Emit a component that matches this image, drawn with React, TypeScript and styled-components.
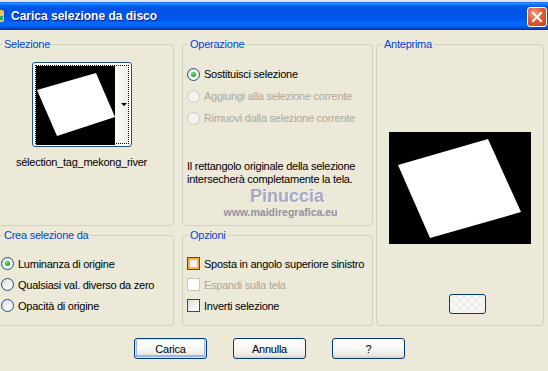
import React from "react";
import styled, { createGlobalStyle } from "styled-components";

const GlobalStyle = createGlobalStyle`
  html, body {
    margin: 0;
    padding: 0;
    background: #ece9d8;
    overflow: hidden;
  }
  body {
    font-family: "Liberation Sans", Arial, sans-serif;
    font-size: 11px;
    letter-spacing: -0.25px;
    color: #000;
  }
`;

const Window = styled.div`
  width: 548px;
  height: 371px;
  display: flex;
  flex-direction: column;
  background: #ece9d8;
  overflow: hidden;
`;

const TopEdge = styled.div`
  height: 2px;
  background: #dfe3ea;
`;

const TitleBar = styled.div`
  height: 28px;
  display: flex;
  align-items: flex-start;
  background: linear-gradient(
    180deg,
    #0058ee 0%,
    #3593ff 4%,
    #127dff 8%,
    #0262ee 14%,
    #0057e5 20%,
    #0054e3 24%,
    #0055eb 56%,
    #005bf5 66%,
    #026afe 76%,
    #0062ef 86%,
    #0052d6 92%,
    #0040ab 96%,
    #003092 100%
  );
`;

const AppIcon = styled.svg`
  width: 16px;
  height: 16px;
  margin: 6px 5px 0 -10px;
  flex: none;
`;

const Title = styled.div`
  color: #fff;
  font-family: "Liberation Sans", Arial, sans-serif;
  font-weight: bold;
  font-size: 12px;
  letter-spacing: 0;
  line-height: 28px;
  text-shadow: 1px 1px 0 #0a1883;
`;

const CloseButton = styled.div`
  margin: 5px 1px 0 auto;
  width: 18px;
  height: 18px;
  border: 1px solid #fff;
  border-radius: 3px;
  background: radial-gradient(circle at 35% 30%, #f0a080 0%, #e35c36 45%, #c2401a 100%);
  display: flex;
  align-items: center;
  justify-content: center;
`;

const Layout = styled.div`
  margin: 8px 0 0 -4px;
  display: grid;
  grid-template-columns: 178px 8px 191px 3px 168px;
  grid-template-rows: 188px 97px;
  row-gap: 3px;
  grid-template-areas:
    "sel . op . prev"
    "crea . opt . prev";
`;

const GroupBox = styled.fieldset<{ $area: string }>`
  grid-area: ${(p) => p.$area};
  margin: 0;
  padding: 0 5px;
  min-width: 0;
  border: 1px solid #d0d0bf;
  border-radius: 4px;
  box-sizing: border-box;
  display: flex;
  flex-direction: column;
`;

const Legend = styled.legend`
  padding: 0 2px;
  color: #0046d5;
  line-height: 12px;
  font-size: 11px;
`;

const SelContent = styled.div`
  display: flex;
  flex-direction: column;
  align-items: center;
  padding-right: 7px;
`;

const ThumbBox = styled.div`
  margin-top: 12px;
  width: 100px;
  height: 85px;
  box-sizing: border-box;
  border: 1px solid #1c5180;
  border-radius: 3px;
  padding: 2px;
  background: #fff;
`;

const FocusRect = styled.div`
  height: 100%;
  box-sizing: border-box;
  border: 1px dotted #000;
  display: flex;
`;

const ThumbScroll = styled.div`
  flex: 1;
  background: linear-gradient(90deg, #fdfdfb, #eeede5);
  display: flex;
  align-items: center;
  justify-content: flex-end;
  padding-right: 1px;
`;

const DownArrow = styled.div`
  width: 0;
  height: 0;
  border-left: 3px solid transparent;
  border-right: 3px solid transparent;
  border-top: 3px solid #000;
`;

const FileName = styled.div`
  margin-top: 9px;
  line-height: 13px;
  white-space: nowrap;
`;

const Options = styled.div<{ $top: number; $row: number }>`
  margin-top: ${(p) => p.$top}px;
  display: flex;
  flex-direction: column;
  & > * {
    height: ${(p) => p.$row}px;
  }
`;

const OptionRow = styled.div<{ $disabled?: boolean }>`
  display: flex;
  align-items: center;
  gap: 4px;
  margin-left: -1px;
  white-space: nowrap;
  color: ${(p) => (p.$disabled ? "#aca899" : "#000")};
`;

const RadioMark = styled.span<{ $disabled?: boolean }>`
  width: 13px;
  height: 13px;
  box-sizing: border-box;
  border-radius: 50%;
  border: 1px solid ${(p) => (p.$disabled ? "#cac8bb" : "#1c5180")};
  background: ${(p) =>
    p.$disabled ? "#f4f3ee" : "linear-gradient(135deg, #dcdcd7 0%, #fdfdfc 80%)"};
  display: flex;
  align-items: center;
  justify-content: center;
  flex: none;
`;

const RadioDot = styled.span`
  width: 5px;
  height: 5px;
  border-radius: 50%;
  background: radial-gradient(circle at 40% 35%, #6ee66a 0%, #21a121 70%, #177a17 100%);
`;

const CheckMark = styled.span<{ $disabled?: boolean; $hot?: boolean }>`
  width: 13px;
  height: 13px;
  box-sizing: border-box;
  border: 1px solid ${(p) => (p.$disabled ? "#cac8bb" : "#1c5180")};
  background: ${(p) =>
    p.$disabled ? "#fff" : "linear-gradient(135deg, #dcdcd7 0%, #fdfdfc 80%)"};
  box-shadow: ${(p) => (p.$hot ? "inset 0 0 0 2px #f8b636" : "none")};
  flex: none;
`;

const Description = styled.div`
  margin-top: 31px;
  margin-left: -1px;
  line-height: 13px;
`;

const Watermark = styled.div`
  display: flex;
  flex-direction: column;
  align-items: center;
  letter-spacing: 0;
`;

const WatermarkName = styled.div`
  margin-left: 19px;
  font-family: "Liberation Sans", Arial, sans-serif;
  font-weight: bold;
  font-size: 18px;
  line-height: 20px;
  color: #a8a8c0;
  text-shadow: 1px 1px 0 #f6f6fa;
`;

const WatermarkUrl = styled.div`
  margin-left: 6px;
  font-family: "Liberation Sans", Arial, sans-serif;
  font-weight: bold;
  font-size: 10.5px;
  line-height: 12px;
  color: #92929f;
`;

const PreviewContent = styled.div`
  display: flex;
  flex-direction: column;
  align-items: center;
`;

const PreviewImage = styled.svg`
  margin-top: 82px;
  display: block;
`;

const PreviewButton = styled.div`
  margin: 50px 0 0 67px;
  align-self: flex-start;
  width: 37px;
  height: 20px;
  box-sizing: border-box;
  border: 1px solid #003c74;
  border-radius: 3px;
  background-color: #f8f8f6;
  background-image: linear-gradient(45deg, #eeeeeb 25%, transparent 25%, transparent 75%, #eeeeeb 75%),
    linear-gradient(45deg, #eeeeeb 25%, transparent 25%, transparent 75%, #eeeeeb 75%);
  background-size: 8px 8px;
  background-position: 0 0, 4px 4px;
`;

const ButtonRow = styled.div`
  margin-top: 12px;
  padding-right: 9px;
  display: flex;
  justify-content: center;
  gap: 26px;
`;

const DialogButton = styled.button<{ $default?: boolean }>`
  width: 73px;
  height: 21px;
  padding: 0;
  border: 1px solid #003c74;
  border-radius: 3px;
  font-family: "Liberation Sans", Arial, sans-serif;
  font-size: 11px;
  letter-spacing: -0.25px;
  color: #000;
  background: linear-gradient(180deg, #ffffff 0%, #f6f6f3 55%, #e9e8e1 85%, #d6d0c5 100%);
  box-shadow: ${(p) =>
    p.$default ? "inset 0 0 0 1px #cee7ff, inset 0 -1px 0 2px #98b8f5" : "none"};
`;

function Radio({ label, checked, disabled }: { label: string; checked?: boolean; disabled?: boolean }) {
  return (
    <OptionRow $disabled={disabled}>
      <RadioMark $disabled={disabled}>{checked && <RadioDot />}</RadioMark>
      {label}
    </OptionRow>
  );
}

function Check({ label, disabled, hot }: { label: string; disabled?: boolean; hot?: boolean }) {
  return (
    <OptionRow $disabled={disabled}>
      <CheckMark $disabled={disabled} $hot={hot} />
      {label}
    </OptionRow>
  );
}

export default function App() {
  return (
    <>
      <GlobalStyle />
      <Window>
        <TopEdge />
        <TitleBar>
          <AppIcon viewBox="0 0 16 16">
            <rect x="2" y="2" width="12" height="12" rx="2" fill="#f2c94c" />
            <rect x="4" y="4" width="4" height="4" fill="#d33" />
            <rect x="9" y="8" width="4" height="4" fill="#2a7" />
          </AppIcon>
          <Title>Carica selezione da disco</Title>
          <CloseButton>
            <svg width="12" height="12" viewBox="0 0 12 12">
              <path d="M2 2 L10 10 M10 2 L2 10" stroke="#fff" strokeWidth="2" strokeLinecap="square" />
            </svg>
          </CloseButton>
        </TitleBar>

        <Layout>
          <GroupBox $area="sel">
            <Legend>Selezione</Legend>
            <SelContent>
              <ThumbBox>
                <FocusRect>
                  <svg width="79" height="79" viewBox="0 0 79 79">
                    <rect width="79" height="79" fill="#000" />
                    <polygon points="1,24 60,7 79,51 21,70" fill="#fff" />
                  </svg>
                  <ThumbScroll>
                    <DownArrow />
                  </ThumbScroll>
                </FocusRect>
              </ThumbBox>
              <FileName>sélection_tag_mekong_river</FileName>
            </SelContent>
          </GroupBox>

          <GroupBox $area="op">
            <Legend>Operazione</Legend>
            <Options $top={13} $row={22}>
              <Radio label="Sostituisci selezione" checked />
              <Radio label="Aggiungi alla selezione corrente" disabled />
              <Radio label="Rimuovi dalla selezione corrente" disabled />
            </Options>
            <Description>
              Il rettangolo originale della selezione
              <br />
              intersecherà completamente la tela.
            </Description>
            <Watermark>
              <WatermarkName>Pinuccia</WatermarkName>
              <WatermarkUrl>www.maidiregrafica.eu</WatermarkUrl>
            </Watermark>
          </GroupBox>

          <GroupBox $area="prev">
            <Legend>Anteprima</Legend>
            <PreviewContent>
              <PreviewImage width="142" height="112" viewBox="0 0 142 112">
                <rect width="142" height="112" fill="#000" />
                <polygon points="9,33 99,7 132,80 41,106" fill="#fff" />
              </PreviewImage>
              <PreviewButton />
            </PreviewContent>
          </GroupBox>

          <GroupBox $area="crea">
            <Legend>Crea selezione da</Legend>
            <Options $top={12} $row={21}>
              <Radio label="Luminanza di origine" checked />
              <Radio label="Qualsiasi val. diverso da zero" />
              <Radio label="Opacità di origine" />
            </Options>
          </GroupBox>

          <GroupBox $area="opt">
            <Legend>Opzioni</Legend>
            <Options $top={12} $row={21}>
              <Check label="Sposta in angolo superiore sinistro" hot />
              <Check label="Espandi sulla tela" disabled />
              <Check label="Inverti selezione" />
            </Options>
          </GroupBox>
        </Layout>

        <ButtonRow>
          <DialogButton $default>Carica</DialogButton>
          <DialogButton>Annulla</DialogButton>
          <DialogButton>?</DialogButton>
        </ButtonRow>
      </Window>
    </>
  );
}
